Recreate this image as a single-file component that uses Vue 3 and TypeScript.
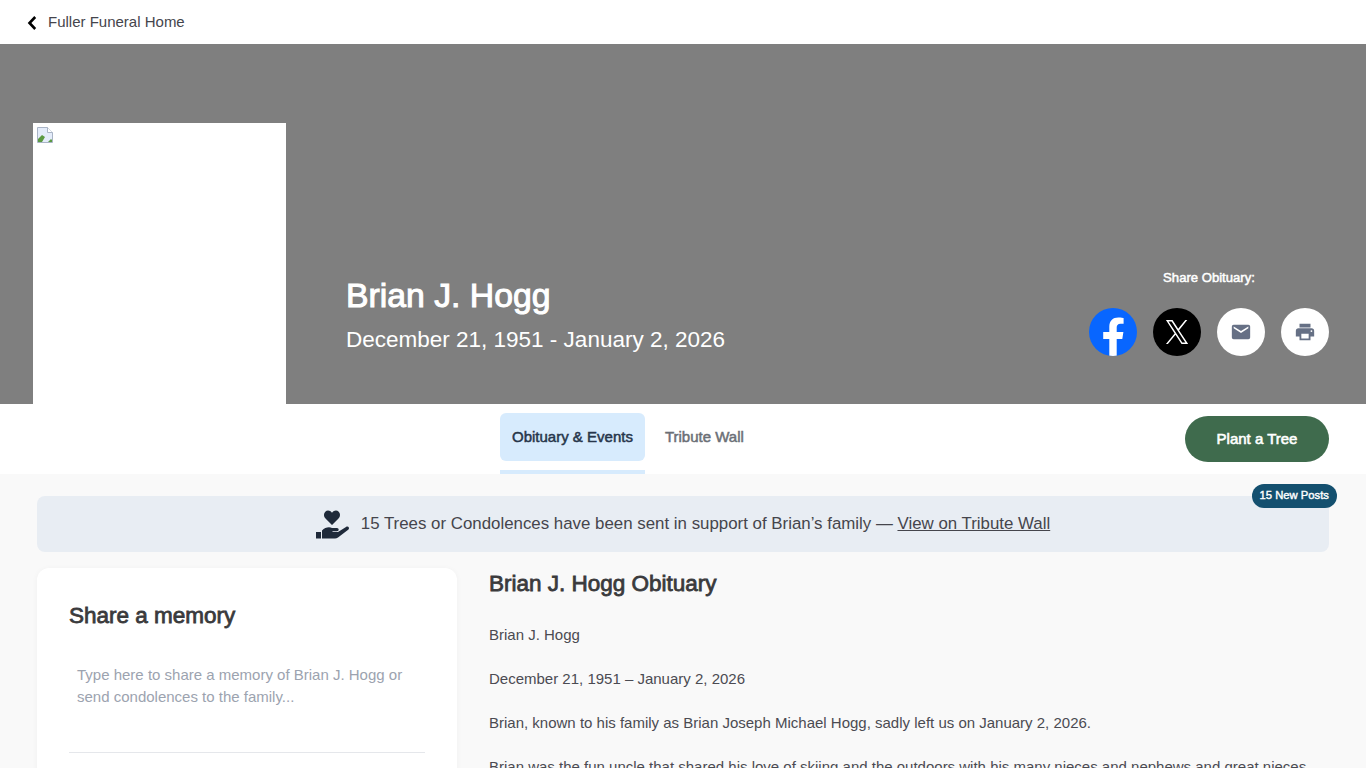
<script setup lang="ts">
const paragraphs = [
  'Brian J. Hogg',
  'December 21, 1951 – January 2, 2026',
  'Brian, known to his family as Brian Joseph Michael Hogg, sadly left us on January 2, 2026.',
  'Brian was the fun uncle that shared his love of skiing and the outdoors with his many nieces and nephews and great nieces',
]
</script>

<template>
  <div class="page">
    <header class="topbar">
      <a class="back">
        <svg class="chev" width="10" height="16" viewBox="0 0 10 16"><path d="M8.200 2 2.500 8l5.700 6" fill="none" stroke="#000" stroke-width="2.600" /></svg>
        <span class="back-label">Fuller Funeral Home</span>
      </a>
    </header>

    <section class="hero">
      <div class="photo">
        <svg class="broken" width="16" height="16" viewBox="0 0 16 16">
          <path d="M.5.500h10l5 5v10H.5z" fill="#e4ecfa" stroke="#a9b4c6" />
          <path d="M10.500.500v5h5" fill="#fff" stroke="#a9b4c6" />
          <path d="M1 15v-3l4-4 3 2-3 5z" fill="#5c9a42" />
          <path d="M11 15l3-3 1 1v2z" fill="#5c9a42" />
        </svg>
      </div>
      <div class="who">
        <h1>Brian J. Hogg</h1>
        <p>December 21, 1951 - January 2, 2026</p>
      </div>
      <div class="share">
        <div class="share-label">Share Obituary:</div>
        <div class="share-icons">
          <span class="circle fb">
            <svg width="48" height="48" viewBox="0 0 48 48"><path d="M33.300 30.900 34.400 24h-6.700v-4.500c0-1.900.9-3.700 3.900-3.700h3V9.900s-2.700-.5-5.300-.5c-5.500 0-9 3.300-9 9.300V24h-6.100v6.900h6.100V48h7.400V30.900z" fill="#fff" /></svg>
          </span>
          <span class="circle x">
            <svg width="26" height="28" viewBox="0 0 24 24" preserveAspectRatio="none"><path d="M13.900 10.500 21.500 1.800h-1.800l-6.600 7.500L7.900 1.800H1.800l8 11.500-8 9h1.800l7-7.900 5.600 7.900h6.100zM4.200 3.100h2.800l12.700 17.900h-2.800z" fill="#fff" /></svg>
          </span>
          <span class="circle">
            <svg width="22" height="22" viewBox="0 0 24 24"><path d="M20 4H4a2 2 0 0 0-2 2v12a2 2 0 0 0 2 2h16a2 2 0 0 0 2-2V6a2 2 0 0 0-2-2zm0 4-8 5-8-5V6l8 5 8-5z" fill="#667085" /></svg>
          </span>
          <span class="circle">
            <svg width="22" height="22" viewBox="0 0 24 24"><path d="M19 8H5a3 3 0 0 0-3 3v6h4v4h12v-4h4v-6a3 3 0 0 0-3-3zm-3 11H8v-5h8zm3-7a1 1 0 1 1 0-2 1 1 0 0 1 0 2zM18 3H6v4h12z" fill="#667085" /></svg>
          </span>
        </div>
      </div>
    </section>

    <nav class="tabs">
      <div class="tab-group">
        <div class="tab-wrap active"><span class="tab">Obituary &amp; Events</span></div>
        <div class="tab-wrap"><span class="tab">Tribute Wall</span></div>
      </div>
      <button class="plant">Plant a Tree</button>
    </nav>

    <main class="content">
      <div class="banner">
        <svg width="34" height="30" viewBox="0 0 34 30" fill="#1f2a3a">
          <path d="M16 16 9.500 9.500C7.500 7.500 7.500 4.500 9.300 2.700c1.800-1.800 4.800-1.500 6.700 1 1.900-2.500 4.900-2.800 6.700-1 1.800 1.800 1.800 4.800-.2 6.800z" />
          <path d="M0 23h5v6.500H0zM6 21.500c3-3 7-4 10-2.500h5c2 0 2.500 3 0 3.300h-4.500v.7H22l8-5c2-1.300 4 .8 2.500 2.500L22 28.500c-1 .7-2 1-3 1H6z" />
        </svg>
        <span>15 Trees or Condolences have been sent in support of Brian’s family — <a>View on Tribute Wall</a></span>
        <span class="badge">15 New Posts</span>
      </div>

      <div class="columns">
        <aside class="memory">
          <h3>Share a memory</h3>
          <div class="placeholder">Type here to share a memory of Brian J. Hogg or send condolences to the family...</div>
          <div class="rule"></div>
        </aside>
        <article class="obit">
          <h2>Brian J. Hogg Obituary</h2>
          <p v-for="(t, i) in paragraphs" :key="i">{{ t }}</p>
        </article>
      </div>
    </main>
  </div>
</template>

<style>
html, body { margin: 0; overflow: hidden; background: #f9f9f9; }
</style>

<style scoped>
.page {
  font-family: "Liberation Sans", Arial, sans-serif;
  color: #3a3a3c;
  height: 768px;
  overflow: hidden;
}
.topbar { height: 44px; background: #fff; display: flex; align-items: center; padding-left: 27px; }
.back { display: flex; align-items: center; gap: 11px; font-size: 15px; color: #45454c; }
.back-label { margin-bottom: 2px; }
.chev { display: block; margin-top: 2px; }
.hero {
  height: 360px;
  background: #7f7f7f;
  display: flex;
  align-items: flex-end;
  padding-left: 33px;
  padding-right: 37px;
}
.photo { width: 253px; height: 281px; background: #fff; padding: 4px; box-sizing: border-box; }
.broken { display: block; }
.who { margin-left: 60px; padding-bottom: 49px; color: #fff; flex: 1; }
/* the headings look like a regular cut thickened by the browser, so regular + stroke */
.who h1 { margin: 0; font-size: 33.750px; line-height: 42px; font-weight: 400; -webkit-text-stroke: 1px #fff; position: relative; top: -2px; }
.who p { margin: 7px 0 0; font-size: 22.500px; line-height: 30px; }
.share { padding-bottom: 48px; display: flex; flex-direction: column; align-items: center; }
.share-label { color: #fff; font-size: 13.125px; font-weight: 400; -webkit-text-stroke: 0.5px #fff; margin-bottom: 23px; }
.share-icons { display: flex; gap: 16px; }
.circle {
  width: 48px; height: 48px; border-radius: 50%; background: #fff;
  display: flex; align-items: center; justify-content: center; overflow: hidden;
}
.circle.fb { background: #0866ff; }
.circle.x { background: #000; }
.tabs { height: 70px; background: #fff; position: relative; display: flex; padding-left: 500px; }
.tab-group { display: flex; gap: 8px; padding-top: 9px; }
.tab-wrap { height: 61px; box-sizing: border-box; }
.tab-wrap.active { border-bottom: 4px solid #d7ebfd; }
.tab {
  display: flex; align-items: center; height: 48px; box-sizing: border-box; padding: 0 12px 2px;
  font-size: 15px; color: #6b6f76; border-radius: 6px;
  -webkit-text-stroke: 0.5px #6b6f76;
}
.active .tab { background: #d7ebfd; color: #27364b; -webkit-text-stroke-color: #27364b; }
.plant {
  position: absolute; right: 37px; top: 12px;
  width: 144px; height: 46px; border: 0; border-radius: 23px; padding: 0 0 2px;
  background: #3f6b4d; color: #fff; font: 400 15px "Liberation Sans", Arial, sans-serif;
  -webkit-text-stroke: 0.6px #fff;
}
.content { padding: 22px 37px 0; }
.banner {
  position: relative; height: 56px; border-radius: 8px; background: #e8edf3;
  display: flex; align-items: center; justify-content: center; gap: 11px;
  font-size: 16.875px; color: #45454c;
}
.banner a { text-decoration: underline; }
.badge {
  position: absolute; right: -8px; top: -12px; height: 24px; box-sizing: border-box; padding: 0 8px 2px;
  display: flex; align-items: center; border-radius: 12px;
  background: #14506f; color: #fff; font-size: 11.250px;
  -webkit-text-stroke: 0.4px #fff;
}
.columns { display: flex; gap: 32px; margin-top: 16px; align-items: flex-start; }
.memory {
  width: 420px; height: 300px; flex-shrink: 0; box-sizing: border-box; background: #fff;
  border-radius: 12px; padding: 32px; box-shadow: 0 1px 6px rgba(0, 0, 0, 0.04);
}
.memory h3 { margin: 0; font-size: 22.500px; line-height: 30px; font-weight: 400; -webkit-text-stroke: 0.8px #3a3a3c; position: relative; top: 1px; }
.placeholder { margin-top: 34px; padding: 0 8px; font-size: 15px; line-height: 22px; color: #9ca3af; height: 88px; }
.rule { border-top: 1px solid #e5e7eb; }
.obit { flex: 1; min-width: 0; padding-top: 1px; }
.obit h2 { margin: 0 0 25px; font-size: 22.500px; line-height: 30px; font-weight: 400; -webkit-text-stroke: 0.8px #3a3a3c; }
.obit p { margin: 0 0 22px; font-size: 15px; line-height: 22px; white-space: nowrap; color: #4b4b52; }
</style>
